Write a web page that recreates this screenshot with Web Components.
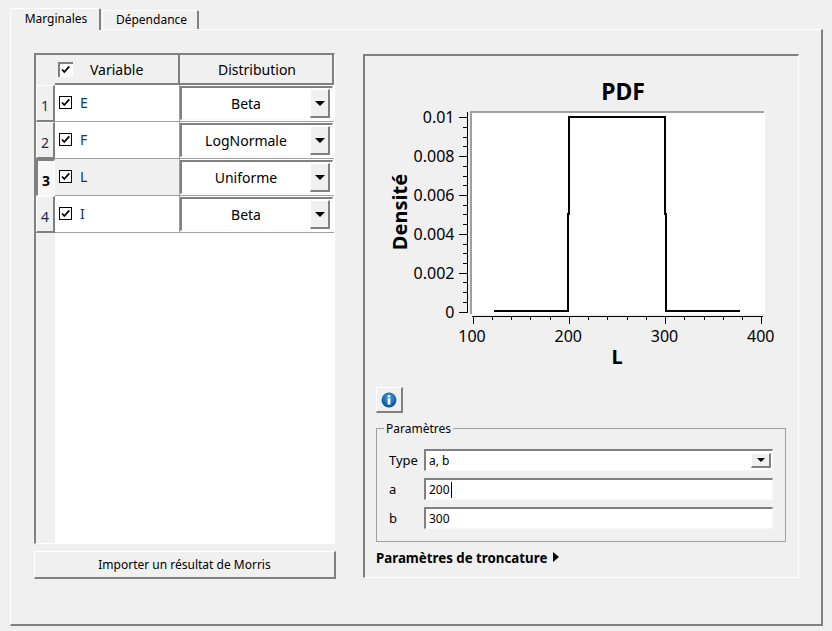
<!DOCTYPE html>
<html lang="fr">
<head>
<meta charset="utf-8">
<title>Marginales</title>
<style>
  html, body { margin: 0; padding: 0; background: #f0f0f0; }
  body { font: 12px "Noto Sans", "Liberation Sans", sans-serif; color: #000; }
</style>
</head>
<body>
<mx-app></mx-app>
<script>
"use strict";

(() => {
  const GREY = "#808080";

  customElements.define("mx-tab", class extends HTMLElement {
    constructor() {
      super();
      this.attachShadow({mode: "open"}).innerHTML = `
      <style>
      :host {
        display: flex;
        align-items: center;
        justify-content: center;
        box-sizing: border-box;
        height: 19px;
        background: #f0f0f0;
        border-top: 1px solid #fff;
        border-left: 1px solid #fff;
        border-right: 2px solid ${GREY};
        border-radius: 2px 2px 0 0;
        white-space: nowrap;
        padding-bottom: 1px;
        padding-left: 3px;
      }
      :host([active]) {
        height: 22px;
        margin-bottom: -1px;
        padding-bottom: 3px;
        padding-left: 2px;
        z-index: 1;
      }
      </style>
      <slot></slot>
      `;
    }
  });

  customElements.define("mx-check", class extends HTMLElement {
    constructor() {
      super();
      this.attachShadow({mode: "open"}).innerHTML = `
      <style>
      :host { display: block; width: 13px; height: 13px; flex: none; }
      svg { display: block; }
      .sunken { display: none; }
      :host([header]) { width: 15px; height: 15px; }
      :host([header]) .plain { display: none; }
      :host([header]) .sunken { display: block; }
      </style>
      <svg class="plain" width="13" height="13" viewBox="0 0 13 13">
        <rect id="box" x="0.5" y="0.5" width="12" height="12" fill="#fff" stroke="#000"></rect>
        <path d="M3 6.5 L5.3 9 L10.3 3.4" fill="none" stroke="#000" stroke-width="1.8"></path>
      </svg>
      <svg class="sunken" width="15" height="15" viewBox="0 0 15 15">
        <rect width="15" height="15" fill="#fff"></rect>
        <path d="M1 15V1H15" fill="none" stroke="${GREY}" stroke-width="2"></path>
        <path d="M4 7.5 L6.3 10 L11.3 4.4" fill="none" stroke="#000" stroke-width="1.8"></path>
      </svg>
      `;
    }

    connectedCallback() {
      if (this.hasAttribute("flat")) {
        this.shadowRoot.getElementById("box").setAttribute("stroke", "#fff");
      }
    }
  });

  customElements.define("mx-drop", class extends HTMLElement {
    constructor() {
      super();
      this.attachShadow({mode: "open"}).innerHTML = `
      <style>
      :host {
        display: flex;
        align-items: center;
        justify-content: center;
        box-sizing: border-box;
        flex: none;
        width: 20px;
        height: 29px;
        background: #f0f0f0;
        border-top: 1px solid #fff;
        border-left: 1px solid #fff;
        border-right: 2px solid ${GREY};
        border-bottom: 2px solid ${GREY};
      }
      :host([small]) { height: 15px; }
      i {
        display: block;
        border-top: 5px solid #000;
        border-left: 5px solid transparent;
        border-right: 5px solid transparent;
      }
      :host([small]) i {
        border-top-width: 4px;
        border-left-width: 4px;
        border-right-width: 4px;
      }
      </style>
      <i></i>
      `;
    }
  });

  customElements.define("mx-combo", class extends HTMLElement {
    constructor() {
      super();
      this.attachShadow({mode: "open"}).innerHTML = `
      <style>
      :host {
        display: flex;
        align-items: center;
        box-sizing: border-box;
        background: #fff;
        border-top: 2px solid ${GREY};
        border-left: 2px solid ${GREY};
        border-right: 1px solid #f8f8f8;
        border-bottom: 1px solid #f8f8f8;
        font-size: 14px;
        padding-right: 2px;
      }
      span { flex: 1; text-align: center; }
      :host([small]) { font-size: 12px; padding-right: 1px; }
      :host([small]) span { text-align: left; padding-left: 3px; }
      </style>
      <span><slot></slot></span>
      <mx-drop></mx-drop>
      `;
    }

    connectedCallback() {
      if (this.hasAttribute("small")) {
        this.shadowRoot.querySelector("mx-drop").setAttribute("small", "");
      }
    }
  });

  customElements.define("mx-row", class extends HTMLElement {
    constructor() {
      super();
      this.attachShadow({mode: "open"}).innerHTML = `
      <style>
      :host {
        display: grid;
        grid-template-columns: 19px 125px 154px;
        height: 37px;
        font-size: 14px;
      }
      .num {
        display: flex;
        align-items: center;
        justify-content: center;
        box-sizing: border-box;
        background: #f0f0f0;
        border-top: 1px solid #fff;
        border-left: 1px solid #fff;
        border-right: 2px solid ${GREY};
        border-bottom: 2px solid ${GREY};
        padding-top: 4px;
        color: #1b2a4a;
      }
      .var {
        display: flex;
        align-items: center;
        gap: 8px;
        box-sizing: border-box;
        background: #fff;
        padding-left: 4px;
        padding-bottom: 2px;
        border-bottom: 1px solid #a0a0a0;
        border-right: 1px solid #a0a0a0;
        color: #0a3a78;
      }
      .dist {
        box-sizing: border-box;
        background: #fff;
        padding: 1px 1px 1px 0;
        border-bottom: 1px solid #a0a0a0;
        display: grid;
      }
      :host([current]) .num {
        font-weight: 700;
        color: #000;
        border-top: 2px solid ${GREY};
        border-left: 2px solid ${GREY};
        border-right: 1px solid #fff;
        border-bottom: 1px solid #fff;
        background: repeating-conic-gradient(#fff 0 25%, #f0f0f0 0 50%) 0 0 / 2px 2px;
      }
      :host([current]) .var { background: #f0f0f0; }
      </style>
      <div class="num"></div>
      <div class="var"><mx-check></mx-check><span></span></div>
      <div class="dist"><mx-combo></mx-combo></div>
      `;
    }

    connectedCallback() {
      const root = this.shadowRoot;
      root.querySelector(".num").textContent = this.getAttribute("num");
      root.querySelector(".var span").textContent = this.getAttribute("name");
      root.querySelector("mx-combo").textContent = this.getAttribute("dist");
      if (this.hasAttribute("current")) {
        root.querySelector("mx-check").setAttribute("flat", "");
      }
    }
  });

  customElements.define("mx-var-table", class extends HTMLElement {
    constructor() {
      super();
      this.attachShadow({mode: "open"}).innerHTML = `
      <style>
      :host {
        display: block;
        box-sizing: border-box;
        width: 301px;
        height: 491px;
        border-top: 2px solid ${GREY};
        border-left: 2px solid ${GREY};
        border-right: 1px solid #fff;
        border-bottom: 1px solid #fff;
        background: linear-gradient(to right, #f0f0f0 19px, #fff 19px);
      }
      .head {
        display: grid;
        grid-template-columns: 19px 125px 154px;
        height: 30px;
        font-size: 14px;
        background: #f0f0f0;
      }
      .head > div {
        display: flex;
        align-items: center;
        box-sizing: border-box;
        border-bottom: 2px solid ${GREY};
      }
      .head > div + div { border-right: 2px solid ${GREY}; }
      .head .corner { border-bottom: 0; }
      .var { gap: 17px; padding-left: 3px; }
      .dist { justify-content: center; padding-left: 2px; }
      </style>
      <div class="head">
        <div class="corner"></div>
        <div class="var"><mx-check header></mx-check><span>Variable</span></div>
        <div class="dist">Distribution</div>
      </div>
      <slot></slot>
      `;
    }
  });

  customElements.define("mx-button", class extends HTMLElement {
    constructor() {
      super();
      this.attachShadow({mode: "open"}).innerHTML = `
      <style>
      :host {
        display: flex;
        align-items: center;
        justify-content: center;
        box-sizing: border-box;
        background: #f0f0f0;
        border-top: 1px solid #fff;
        border-left: 1px solid #fff;
        border-right: 2px solid ${GREY};
        border-bottom: 2px solid ${GREY};
      }
      </style>
      <slot></slot>
      `;
    }
  });

  customElements.define("mx-pdf-chart", class extends HTMLElement {
    constructor() {
      super();

      // coordinates below are those of the window, the viewBox shifts them
      const xOf = v => 472.5 + (v - 100) * 0.9625;
      const yOf = v => 311.5 - v * 19420;
      let axes = "";
      let labels = "";

      for (let i = 0; i <= 20; i++) {
        const y = Math.round(yOf(i * 0.0005)) + 0.5;
        axes += `M${i % 4 === 0 ? 459 : 463} ${y}H468 `;
      }
      for (let i = 0; i <= 15; i++) {
        const x = Math.round(xOf(100 + i * 20)) + 0.5;
        axes += `M${x} 316V${i % 5 === 0 ? 324 : 320} `;
      }
      ["0", "0.002", "0.004", "0.006", "0.008", "0.01"].forEach((t, i) => {
        labels += `<text x="454.5" y="${yOf(i * 0.002) + 6}" text-anchor="end">${t}</text>`;
      });
      [100, 200, 300, 400].forEach(v => {
        labels += `<text x="${xOf(v) - 0.5}" y="342" text-anchor="middle">${v}</text>`;
      });

      this.attachShadow({mode: "open"}).innerHTML = `
      <style>
      :host { display: block; width: 410px; height: 312px; }
      svg { display: block; font: 16px "Noto Sans", "Liberation Sans", sans-serif; }
      .title { font-weight: 700; font-size: 20px; }
      .big { font-size: 23px; }
      </style>
      <svg width="410" height="312" viewBox="376 75 410 312">
        <rect x="470" y="111" width="295" height="203" fill="#fff"></rect>
        <path d="M471 314V112H764" fill="none" stroke="#a0a0a0" stroke-width="2"></path>
        <path d="M467.5 112V312M472 316.5H763" fill="none" stroke="#000"></path>
        <path d="${axes}" fill="none" stroke="#000"></path>
        ${labels}
        <path d="M494 311H568V214H569V117H665V214H666V311H740" fill="none" stroke="#000" stroke-width="2"></path>
        <text class="title big" x="623" y="100" text-anchor="middle">PDF</text>
        <text class="title" x="617" y="364" text-anchor="middle">L</text>
        <text class="title" x="407" y="212" text-anchor="middle" transform="rotate(-90 407 212)">Densité</text>
      </svg>
      `;
    }
  });

  customElements.define("mx-info-button", class extends HTMLElement {
    constructor() {
      super();
      this.attachShadow({mode: "open"}).innerHTML = `
      <style>
      :host {
        display: flex;
        align-items: center;
        justify-content: center;
        box-sizing: border-box;
        width: 27px;
        height: 26px;
        background: #f0f0f0;
        border-top: 1px solid #fff;
        border-left: 1px solid #fff;
        border-right: 2px solid ${GREY};
        border-bottom: 2px solid ${GREY};
      }
      </style>
      <svg width="16" height="16" viewBox="0 0 16 16">
        <defs>
          <radialGradient id="blue" cx="50%" cy="35%" r="65%">
            <stop offset="0" stop-color="#4f9be0"></stop>
            <stop offset="0.7" stop-color="#1467b5"></stop>
            <stop offset="1" stop-color="#0b4a8f"></stop>
          </radialGradient>
        </defs>
        <circle cx="8" cy="8" r="7.5" fill="url(#blue)"></circle>
        <rect x="6.6" y="3" width="2.8" height="2.4" rx="1" fill="#fff"></rect>
        <rect x="6.6" y="6.4" width="2.8" height="6.2" fill="#fff"></rect>
      </svg>
      `;
    }
  });

  customElements.define("mx-field", class extends HTMLElement {
    constructor() {
      super();
      this.attachShadow({mode: "open"}).innerHTML = `
      <style>
      :host {
        display: flex;
        align-items: center;
        box-sizing: border-box;
        height: 22px;
        padding-left: 3px;
        background: #fff;
        border-top: 2px solid ${GREY};
        border-left: 2px solid ${GREY};
        border-right: 1px solid #f8f8f8;
        border-bottom: 1px solid #f8f8f8;
      }
      i { display: none; width: 1px; height: 16px; background: #000; margin-left: 1px; }
      :host([focused]) i { display: block; }
      </style>
      <slot></slot><i></i>
      `;
    }
  });

  customElements.define("mx-params", class extends HTMLElement {
    constructor() {
      super();
      this.attachShadow({mode: "open"}).innerHTML = `
      <style>
      :host { display: block; width: 410px; }
      fieldset {
        box-sizing: border-box;
        margin: 0;
        padding: 12px 12px 12px 12px;
        border: 1px solid #a0a0a0;
        display: grid;
        grid-template-columns: 35px 349px;
        grid-auto-rows: 22px;
        row-gap: 7px;
        align-items: center;
      }
      legend { margin-left: -5px; padding: 0 2px; }
      mx-combo { height: 22px; }
      .lbl { font-size: 13px; }
      </style>
      <fieldset>
        <legend>Paramètres</legend>
        <span class="lbl">Type</span><mx-combo small>a, b</mx-combo>
        <span class="lbl">a</span><mx-field focused>200</mx-field>
        <span class="lbl">b</span><mx-field>300</mx-field>
      </fieldset>
      `;
    }
  });

  customElements.define("mx-dist-panel", class extends HTMLElement {
    constructor() {
      super();
      this.attachShadow({mode: "open"}).innerHTML = `
      <style>
      :host {
        display: flex;
        flex-direction: column;
        box-sizing: border-box;
        width: 436px;
        height: 524px;
        padding: 19px 0 0 11px;
        border-top: 2px solid ${GREY};
        border-left: 2px solid ${GREY};
        border-right: 1px solid #fff;
        border-bottom: 1px solid #fff;
      }
      mx-params { margin-top: 7px; }
      .trunc {
        display: flex;
        align-items: center;
        gap: 6px;
        margin-top: 8px;
        font-weight: 700;
        font-size: 13.3px;
        line-height: 16px;
      }
      .trunc i {
        display: block;
        border-left: 6px solid #000;
        border-top: 5px solid transparent;
        border-bottom: 5px solid transparent;
        margin-bottom: 3px;
      }
      </style>
      <mx-pdf-chart></mx-pdf-chart>
      <mx-info-button></mx-info-button>
      <mx-params></mx-params>
      <div class="trunc"><span>Paramètres de troncature</span><i></i></div>
      `;
    }
  });

  customElements.define("mx-app", class extends HTMLElement {
    constructor() {
      super();
      this.attachShadow({mode: "open"}).innerHTML = `
      <style>
      :host {
        display: block;
        box-sizing: border-box;
        width: 832px;
        height: 631px;
        padding: 8px 0 0 10px;
      }
      .tabs { display: flex; align-items: flex-end; height: 21px; }
      .tabs mx-tab:first-child { width: 91px; position: relative; }
      .tabs mx-tab:last-child { width: 97px; margin-left: 1px; }
      .pane {
        display: flex;
        align-items: flex-start;
        box-sizing: border-box;
        width: 813px;
        height: 597px;
        padding: 23px 0 0 23px;
        border-top: 1px solid #fff;
        border-left: 1px solid #fff;
        border-right: 2px solid ${GREY};
        border-bottom: 2px solid ${GREY};
      }
      .left { display: flex; flex-direction: column; gap: 7px; width: 302px; }
      mx-button { height: 28px; }
      mx-dist-panel { margin-left: 27px; margin-top: 1px; }
      </style>
      <div class="tabs">
        <mx-tab active>Marginales</mx-tab>
        <mx-tab>Dépendance</mx-tab>
      </div>
      <div class="pane">
        <div class="left">
          <mx-var-table>
            <mx-row num="1" name="E" dist="Beta"></mx-row>
            <mx-row num="2" name="F" dist="LogNormale"></mx-row>
            <mx-row num="3" name="L" dist="Uniforme" current></mx-row>
            <mx-row num="4" name="I" dist="Beta"></mx-row>
          </mx-var-table>
          <mx-button>Importer un résultat de Morris</mx-button>
        </div>
        <mx-dist-panel></mx-dist-panel>
      </div>
      `;
    }
  });
})();
</script>
</body>
</html>
